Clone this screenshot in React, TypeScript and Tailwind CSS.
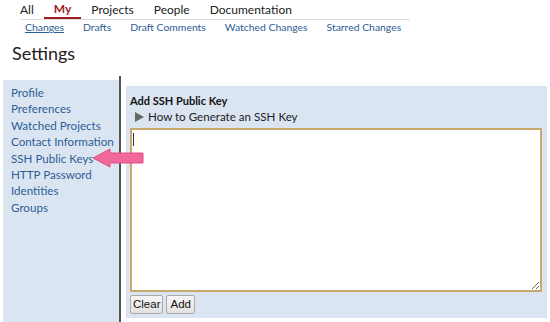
import React from "react";

const font = { fontFamily: 'Lato, "Open Sans", sans-serif' };

export default function App() {
  const sideItems = [
    "Profile",
    "Preferences",
    "Watched Projects",
    "Contact Information",
    "SSH Public Keys",
    "HTTP Password",
    "Identities",
    "Groups",
  ];
  return (
    <div className="relative w-[550px] h-[322px] bg-white overflow-hidden text-[#222]" style={font}>
      {/* Top nav */}
      <div className="flex pl-[10px] h-[19px] items-end">
        <div className="px-[10px] text-[12px] leading-[17px] pb-[1px]">All</div>
        <div className="px-[10px] text-[12px] leading-[17px] font-bold text-[#a01c24] border-b-2 border-[#a01c24]">My</div>
        <div className="px-[10px] text-[12px] leading-[17px] pb-[1px]">Projects</div>
        <div className="px-[10px] text-[12px] leading-[17px] pb-[1px]">People</div>
        <div className="px-[10px] text-[12px] leading-[17px] pb-[1px]">Documentation</div>
      </div>
      <div className="ml-[20px] w-[390px] h-px bg-[#ddd]" />
      <div className="flex pl-[25px] gap-[19px] text-[10.4px] leading-[14px] text-[#2d5d96]">
        <span className="underline">Changes</span>
        <span>Drafts</span>
        <span>Draft Comments</span>
        <span>Watched Changes</span>
        <span>Starred Changes</span>
      </div>
      <div className="pl-[12px] mt-[7px] text-[18px] leading-[24px] text-[#222]">Settings</div>

      {/* Body */}
      <div className="flex mt-[11px] h-[247px]">
        <div className="ml-[3px] mt-[4px] w-[116px] bg-[#dbe5f2] pl-[8px] pt-[5px] text-[11.6px] leading-[16.4px] text-[#2d5d96]">
          {sideItems.map((s) => (
            <div key={s} className="whitespace-nowrap">{s}</div>
          ))}
        </div>
        <div className="w-[2px] bg-[#555]" />
        <div className="ml-[5px] mt-[10px] w-[421px] h-[232px] bg-[#dbe5f2] pl-[4px] pt-[8px]">
          <div className="text-[11px] leading-[14px] font-bold text-[#111]">Add SSH Public Key</div>
          <div className="flex items-center ml-[5px] mt-[1px] h-[16px] text-[11.6px] text-[#222]">
            <svg width="9" height="10" viewBox="0 0 9 10" className="mr-[4px]">
              <path d="M0 0 L9 5 L0 10 Z" fill="#666" />
            </svg>
            <span>How to Generate an SSH Key</span>
          </div>
          <textarea
            className="block w-[412px] h-[164px] mt-[3px] bg-white border-2 border-[#c8a86c] outline-none resize-y px-[2px] py-0"
            defaultValue=""
          />
          <div className="flex gap-[3px] mt-[3px]">
            <button
              className="h-[19px] px-[2px] text-[11.5px] border border-[#aaa] bg-gradient-to-b from-[#f6f6f6] to-[#e2e2e2] text-[#111] rounded-[2px]"
              style={{ fontFamily: '"Liberation Sans", Arial, sans-serif' }}
            >
              Clear
            </button>
            <button
              className="h-[19px] px-[3px] text-[11.5px] border border-[#aaa] bg-gradient-to-b from-[#f6f6f6] to-[#e2e2e2] text-[#111] rounded-[2px]"
              style={{ fontFamily: '"Liberation Sans", Arial, sans-serif' }}
            >
              Add
            </button>
          </div>
        </div>
      </div>

      {/* textarea caret */}
      <div className="absolute left-[133px] top-[133px] w-px h-[13px] bg-[#333]" />

      {/* Pink arrow */}
      <svg className="absolute left-[91px] top-[147px]" width="54" height="22" viewBox="0 0 54 22">
        <path
          d="M2 11 L19 2 L19 6 L52 6 L52 16 L19 16 L19 20 Z"
          fill="#f2689a"
          stroke="#e24a80"
          strokeWidth="1"
          strokeLinejoin="round"
        />
      </svg>
    </div>
  );
}
